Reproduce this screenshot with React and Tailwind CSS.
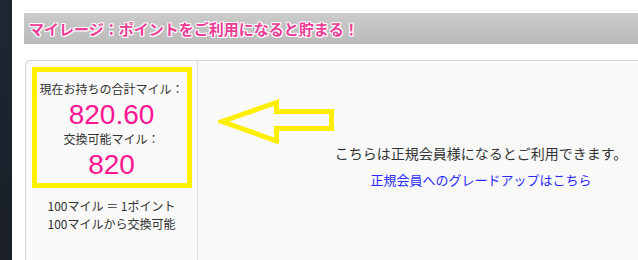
import React from "react";

export default function App() {
  return (
    <div className="flex w-[638px] h-[260px] overflow-hidden bg-white [font-family:'Noto_Sans_CJK_JP','Noto_Sans',sans-serif]">
      <div className="w-[12px] shrink-0 bg-linear-to-b from-[#1f2632] to-[#1a1f29]" />
      <div className="flex-1 min-w-0 flex flex-col pl-[12px] pt-[13px] overflow-hidden">
        <div className="h-[31px] flex items-center pl-[5px] bg-linear-to-b from-[#cbcbcb] to-[#bababa]">
          <span className="text-[15px] font-bold leading-none text-[#ec3c96] [text-shadow:1px_1px_0_#fff,-1px_-1px_0_#fff,1px_-1px_0_#fff,-1px_1px_0_#fff,0_1px_0_#fff,1px_0_0_#fff] whitespace-nowrap">
            マイレージ：ポイントをご利用になると貯まる！
          </span>
        </div>
        <div className="mt-[16px] ml-[1px] w-[739px] shrink-0 flex-1 flex border-l border-t border-[#d6d6d6] rounded-tl-[5px] bg-[#f9f9f9]">
          <div className="w-[172px] shrink-0 border-r border-[#e2e2e2] flex flex-col items-center pt-[6px]">
            <div className="w-[160px] h-[121px] border-[5px] border-[#fff000] flex flex-col items-center pt-[8px] text-[#333333]">
              <div className="text-[12px] leading-[18px] whitespace-nowrap">現在お持ちの合計マイル：</div>
              <div className="mt-[2px] text-[28px] leading-[30px] text-[#ff1493] [font-family:'Liberation_Sans',Arial,sans-serif]">820.60</div>
              <div className="text-[12px] leading-[18px] whitespace-nowrap">交換可能マイル：</div>
              <div className="mt-[2px] text-[28px] leading-[30px] text-[#ff1493] [font-family:'Liberation_Sans',Arial,sans-serif]">820</div>
            </div>
            <div className="mt-[9px] text-[12px] leading-[18px] text-[#333333] text-center whitespace-nowrap">
              <div>100マイル ＝ 1ポイント</div>
              <div>100マイルから交換可能</div>
            </div>
          </div>
          <div className="relative flex-1 flex flex-col items-center pt-[82px]">
            <svg
              className="absolute left-[20px] top-[37px]"
              width="118"
              height="48"
              viewBox="0 0 118 48"
            >
              <polygon
                points="4,23.5 58.5,4.5 58.5,13.5 113.5,13.5 113.5,30.5 58.5,30.5 58.5,43"
                fill="none"
                stroke="#ffee00"
                strokeWidth="5"
                strokeLinejoin="miter"
              />
            </svg>
            <div className="text-[14px] leading-[20px] text-[#333333] whitespace-nowrap">
              こちらは正規会員様になるとご利用できます。
            </div>
            <a className="mt-[7px] text-[13px] leading-[20px] text-[#2b2bff] whitespace-nowrap cursor-pointer">
              正規会員へのグレードアップはこちら
            </a>
          </div>
        </div>
      </div>
    </div>
  );
}
